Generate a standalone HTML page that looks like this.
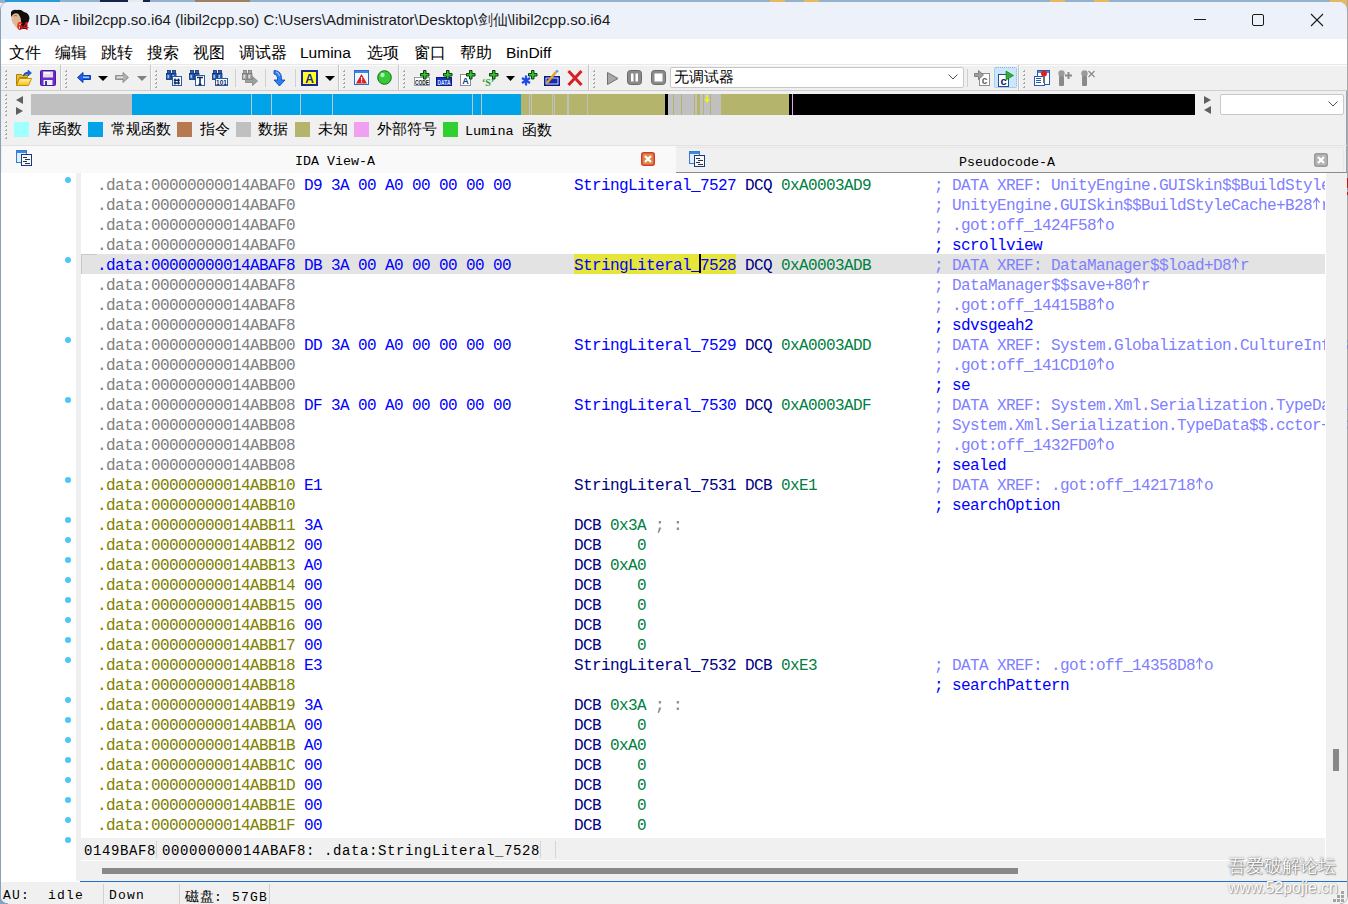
<!DOCTYPE html>
<html><head><meta charset="utf-8"><style>
html,body{margin:0;padding:0;}
body{width:1348px;height:904px;overflow:hidden;position:relative;background:#f0f0f0;font-family:"Liberation Sans",sans-serif;}
.cjk{font-family:"Liberation Sans",sans-serif;}
.r{position:absolute;left:0;height:20px;width:1325px;font-family:"Liberation Mono",monospace;font-size:16px;letter-spacing:-0.6px;line-height:20px;white-space:pre;}
.r span{position:absolute;top:2px;}
.ar{vertical-align:top;display:inline-block;}
.dot{position:absolute;left:65px;width:6px;height:6px;border-radius:50%;background:#4fc4f8;}
.mono13{font-family:"Liberation Mono",monospace;font-size:13.33px;}
</style></head><body>
<!-- desktop strips -->
<div style="position:absolute;left:0;top:0;width:1348px;height:3px;background:#94b2cc"></div>
<div style="position:absolute;left:5px;top:0;width:55px;height:2px;background:#2a9ad8"></div>
<div style="position:absolute;left:100px;top:0;width:50px;height:2px;background:#14244a"></div>
<div style="position:absolute;left:128px;top:0;width:15px;height:2px;background:#e8e8e8"></div>
<div style="position:absolute;left:195px;top:0;width:55px;height:2px;background:#a08060"></div>
<div style="position:absolute;left:770px;top:0;width:15px;height:2px;background:#e8b860"></div>
<div style="position:absolute;left:804px;top:0;width:15px;height:2px;background:#e8b860"></div>
<div style="position:absolute;left:1050px;top:0;width:15px;height:2px;background:#e8b860"></div>
<div style="position:absolute;left:1094px;top:0;width:15px;height:2px;background:#e8b860"></div>
<div style="position:absolute;left:1330px;top:0;width:18px;height:20px;background:#e8b860"></div>
<div style="position:absolute;left:1347px;top:0;width:1px;height:904px;background:#a8a8a8"></div>
<div style="position:absolute;left:1347px;top:178px;width:1px;height:10px;background:#d01010"></div>
<div style="position:absolute;left:1347px;top:192px;width:1px;height:3px;background:#d01010"></div>
<!-- window -->
<div style="position:absolute;left:0;top:2px;width:1347px;height:902px;background:#f0f0f0;border-left:1px solid #8aa2b8;border-top-left-radius:8px;border-top-right-radius:8px;overflow:hidden;box-sizing:border-box;border-right:1px solid #9aa4ae">
</div>
<!-- title bar -->
<div style="position:absolute;left:1px;top:2px;width:1346px;height:37px;background:#edf2fa;border-top-left-radius:8px;border-top-right-radius:8px"></div>
<svg style="position:absolute;left:0;top:0" width="40" height="36" viewBox="0 0 40 36"><path d="M11 12Q13 9 17 10Q21 9 24 12Q29 13 29.5 18Q29 22 27 24L27 29H20L21 22Q20 17 16 14Q13 14 11 17z" fill="#120e0c"/><path d="M12.5 15Q15 12 18.5 14Q21 17 21 22L19.5 28Q17 29 15 26Q12 23 11.5 20Q11 17 12.5 15z" fill="#e2b894"/><path d="M14 16q2-1 3 0" stroke="#705040" stroke-width="0.8" fill="none"/><text x="17" y="29.5" font-size="10.5" font-weight="bold" font-family="Liberation Sans" fill="#e81818">64</text></svg>
<div style="position:absolute;left:35px;top:10px;font-size:15px;line-height:20px;color:#1a1a1a;white-space:pre">IDA - libil2cpp.so.i64 (libil2cpp.so) C:\Users\Administrator\Desktop\剑仙\libil2cpp.so.i64</div>
<div style="position:absolute;left:1194px;top:19px;width:12px;height:1px;background:#1a1a1a"></div>
<div style="position:absolute;left:1252px;top:14px;width:10px;height:10px;border:1px solid #1a1a1a;border-radius:2px"></div>
<svg style="position:absolute;left:1310px;top:13px" width="14" height="14" viewBox="0 0 14 14"><path d="M1 1L13 13M13 1L1 13" stroke="#1a1a1a" stroke-width="1.1"/></svg>
<!-- menu bar -->
<div style="position:absolute;left:1px;top:39px;width:1346px;height:25px;background:#fff"></div>
<div style="position:absolute;left:1px;top:64px;width:1346px;height:1px;background:#e8e8e8"></div>
<div class="menu" style="position:absolute;top:43px;left:0;font-size:15.5px;line-height:20px;color:#000;white-space:pre">
<span style="position:absolute;top:0;left:9px">文件</span><span style="position:absolute;top:0;left:55px">编辑</span><span style="position:absolute;top:0;left:101px">跳转</span><span style="position:absolute;top:0;left:147px">搜索</span><span style="position:absolute;top:0;left:193px">视图</span><span style="position:absolute;top:0;left:239px">调试器</span><span style="position:absolute;top:0;left:300px">Lumina</span><span style="position:absolute;top:0;left:367px">选项</span><span style="position:absolute;top:0;left:414px">窗口</span><span style="position:absolute;top:0;left:460px">帮助</span><span style="position:absolute;top:0;left:506px">BinDiff</span>
</div>
<!-- toolbar -->
<div style="position:absolute;left:1px;top:65px;width:1346px;height:25px;background:#f0f0f0"></div>
<div style="position:absolute;left:1px;top:65px;width:1346px;height:1px;background:#fcfcfc"></div>
<div style="position:absolute;left:1px;top:90px;width:1346px;height:1px;background:#cfcfcf"></div>
<div style="position:absolute;left:5px;top:70px;width:2px;height:2px;background:linear-gradient(135deg,#f8f8f8 0 30%,#a8a8a8 30% 100%)"></div><div style="position:absolute;left:5px;top:74px;width:2px;height:2px;background:linear-gradient(135deg,#f8f8f8 0 30%,#a8a8a8 30% 100%)"></div><div style="position:absolute;left:5px;top:78px;width:2px;height:2px;background:linear-gradient(135deg,#f8f8f8 0 30%,#a8a8a8 30% 100%)"></div><div style="position:absolute;left:5px;top:82px;width:2px;height:2px;background:linear-gradient(135deg,#f8f8f8 0 30%,#a8a8a8 30% 100%)"></div><div style="position:absolute;left:5px;top:86px;width:2px;height:2px;background:linear-gradient(135deg,#f8f8f8 0 30%,#a8a8a8 30% 100%)"></div>
<svg style="position:absolute;left:16px;top:70px" width="16" height="16" viewBox="0 0 16 16"><defs><linearGradient id="fo" x1="0" y1="0" x2="0" y2="1"><stop offset="0" stop-color="#fff4a0"/><stop offset="1" stop-color="#f0c020"/></linearGradient></defs><path d="M0.5 4.5h5l1 1h5v2h-8l-3 8z" fill="#e8c040" stroke="#b08000" stroke-width="1"/><path d="M3.5 8.5h12l-3 7H0.5z" fill="url(#fo)" stroke="#c89000" stroke-width="1"/><path d="M7 6q1-4 5-4V0l3.5 3-3.5 3V4q-3 0-5 2z" fill="#1a5ae8" stroke="#0a3090" stroke-width="0.5"/></svg>
<svg style="position:absolute;left:40px;top:70px" width="16" height="16" viewBox="0 0 16 16"><rect x="0.5" y="0.5" width="15" height="15" rx="1" fill="#6a2ad0" stroke="#4a1a9a"/><rect x="3" y="1.5" width="10" height="6" fill="#e0e0e0"/><rect x="4" y="2" width="6" height="2" fill="#f8f8f8"/><rect x="3.5" y="10" width="9" height="5" fill="#f0f0f0"/><rect x="5" y="11" width="2" height="4" fill="#3a3a9a"/></svg>
<div style="position:absolute;left:60px;top:65px;width:1px;height:25px;background:#c4c4c4"></div><div style="position:absolute;left:61px;top:65px;width:1px;height:25px;background:#fafafa"></div>
<div style="position:absolute;left:65px;top:70px;width:2px;height:2px;background:linear-gradient(135deg,#f8f8f8 0 30%,#a8a8a8 30% 100%)"></div><div style="position:absolute;left:65px;top:74px;width:2px;height:2px;background:linear-gradient(135deg,#f8f8f8 0 30%,#a8a8a8 30% 100%)"></div><div style="position:absolute;left:65px;top:78px;width:2px;height:2px;background:linear-gradient(135deg,#f8f8f8 0 30%,#a8a8a8 30% 100%)"></div><div style="position:absolute;left:65px;top:82px;width:2px;height:2px;background:linear-gradient(135deg,#f8f8f8 0 30%,#a8a8a8 30% 100%)"></div><div style="position:absolute;left:65px;top:86px;width:2px;height:2px;background:linear-gradient(135deg,#f8f8f8 0 30%,#a8a8a8 30% 100%)"></div>
<svg style="position:absolute;left:77px;top:72px" width="14" height="11" viewBox="0 0 14 11"><path d="M0.5 5.5L6 0.5v3h7.5v4H6v3z" fill="#1e5ef0" stroke="#0a2aa0" stroke-width="0.9"/><rect x="6" y="4.5" width="6" height="1.5" fill="#8ad0ff"/></svg>
<svg style="position:absolute;left:98px;top:76px" width="10" height="5" viewBox="0 0 10 5"><path d="M0 0h10L5 5z" fill="#000"/></svg>
<svg style="position:absolute;left:115px;top:72px" width="14" height="11" viewBox="0 0 14 11"><path d="M13.5 5.5L8 0.5v3H0.5v4H8v3z" fill="#b0b0b0" stroke="#888" stroke-width="0.9"/><rect x="2" y="4.5" width="6" height="1.5" fill="#e0e0e0"/></svg>
<svg style="position:absolute;left:137px;top:76px" width="10" height="5" viewBox="0 0 10 5"><path d="M0 0h10L5 5z" fill="#808080"/></svg>
<div style="position:absolute;left:150px;top:65px;width:1px;height:25px;background:#c4c4c4"></div><div style="position:absolute;left:151px;top:65px;width:1px;height:25px;background:#fafafa"></div>
<div style="position:absolute;left:155px;top:70px;width:2px;height:2px;background:linear-gradient(135deg,#f8f8f8 0 30%,#a8a8a8 30% 100%)"></div><div style="position:absolute;left:155px;top:74px;width:2px;height:2px;background:linear-gradient(135deg,#f8f8f8 0 30%,#a8a8a8 30% 100%)"></div><div style="position:absolute;left:155px;top:78px;width:2px;height:2px;background:linear-gradient(135deg,#f8f8f8 0 30%,#a8a8a8 30% 100%)"></div><div style="position:absolute;left:155px;top:82px;width:2px;height:2px;background:linear-gradient(135deg,#f8f8f8 0 30%,#a8a8a8 30% 100%)"></div><div style="position:absolute;left:155px;top:86px;width:2px;height:2px;background:linear-gradient(135deg,#f8f8f8 0 30%,#a8a8a8 30% 100%)"></div>
<svg style="position:absolute;left:166px;top:70px" width="16" height="16" viewBox="0 0 16 16"><rect x="1.5" y="0.5" width="3" height="3" fill="#2a62c0" stroke="#14306a" stroke-width="0.8"/><rect x="6.5" y="0.5" width="3" height="3" fill="#2a62c0" stroke="#14306a" stroke-width="0.8"/><rect x="0.5" y="3.5" width="4.5" height="6" fill="#2a62c0" stroke="#14306a" stroke-width="0.8"/><rect x="5.5" y="3.5" width="4.5" height="6" fill="#2a62c0" stroke="#14306a" stroke-width="0.8"/><rect x="1.5" y="5" width="1.5" height="3" fill="#9ac8f8"/><rect x="6.5" y="5" width="1.5" height="3" fill="#9ac8f8"/><rect x="6.5" y="6.5" width="9" height="9" fill="#fff" stroke="#2a5aa0"/><path d="M9 8.5v6M12.5 8.5v6M7.8 10.3h6M7.8 13h6" stroke="#102a60" stroke-width="1.4"/></svg>
<svg style="position:absolute;left:189px;top:70px" width="16" height="16" viewBox="0 0 16 16"><rect x="1.5" y="0.5" width="3" height="3" fill="#2a62c0" stroke="#14306a" stroke-width="0.8"/><rect x="6.5" y="0.5" width="3" height="3" fill="#2a62c0" stroke="#14306a" stroke-width="0.8"/><rect x="0.5" y="3.5" width="4.5" height="6" fill="#2a62c0" stroke="#14306a" stroke-width="0.8"/><rect x="5.5" y="3.5" width="4.5" height="6" fill="#2a62c0" stroke="#14306a" stroke-width="0.8"/><rect x="1.5" y="5" width="1.5" height="3" fill="#9ac8f8"/><rect x="6.5" y="5" width="1.5" height="3" fill="#9ac8f8"/><rect x="6.5" y="5.5" width="9" height="10" fill="#fff" stroke="#2a5aa0"/><path d="M8 7.5h6M11 7.5v7M9.5 14.5h3" stroke="#102a60" stroke-width="1.6"/></svg>
<svg style="position:absolute;left:212px;top:70px" width="16" height="16" viewBox="0 0 16 16"><rect x="1.5" y="0.5" width="3" height="3" fill="#2a62c0" stroke="#14306a" stroke-width="0.8"/><rect x="6.5" y="0.5" width="3" height="3" fill="#2a62c0" stroke="#14306a" stroke-width="0.8"/><rect x="0.5" y="3.5" width="4.5" height="6" fill="#2a62c0" stroke="#14306a" stroke-width="0.8"/><rect x="5.5" y="3.5" width="4.5" height="6" fill="#2a62c0" stroke="#14306a" stroke-width="0.8"/><rect x="1.5" y="5" width="1.5" height="3" fill="#9ac8f8"/><rect x="6.5" y="5" width="1.5" height="3" fill="#9ac8f8"/><rect x="3.5" y="8.5" width="12" height="7" fill="#fff" stroke="#2a5aa0"/><text x="9.5" y="14.6" font-size="6.5" font-family="Liberation Sans" font-weight="bold" text-anchor="middle" fill="#102a60">101</text></svg>
<div style="position:absolute;left:235px;top:69px;width:1px;height:18px;background:#d0d0d0"></div>
<svg style="position:absolute;left:242px;top:70px" width="16" height="16" viewBox="0 0 16 16"><rect x="1.5" y="0.5" width="3" height="3" fill="#a8a8a8" stroke="#787878" stroke-width="0.8"/><rect x="6.5" y="0.5" width="3" height="3" fill="#a8a8a8" stroke="#787878" stroke-width="0.8"/><rect x="0.5" y="3.5" width="4.5" height="6" fill="#a8a8a8" stroke="#787878" stroke-width="0.8"/><rect x="5.5" y="3.5" width="4.5" height="6" fill="#a8a8a8" stroke="#787878" stroke-width="0.8"/><rect x="1.5" y="5" width="1.5" height="3" fill="#e0e0e0"/><rect x="6.5" y="5" width="1.5" height="3" fill="#e0e0e0"/><path d="M3.5 9.5h7v-3l5 4.5-5 4.5v-3h-7z" fill="#a0a0a0" stroke="#808080" stroke-width="0.8"/></svg>
<div style="position:absolute;left:265px;top:69px;width:1px;height:18px;background:#d0d0d0"></div>
<svg style="position:absolute;left:273px;top:70px" width="13" height="16" viewBox="0 0 13 16"><path d="M1 0.5q7 0 7.5 7v2.5h3.5l-5.5 6-5.5-6h3.5V8q0-3.5-3.5-4z" fill="#2a80f0" stroke="#0a40b0" stroke-width="0.8"/><path d="M3 2q3 0.5 3.5 4" stroke="#a0d8ff" stroke-width="1" fill="none"/></svg>
<div style="position:absolute;left:295px;top:69px;width:1px;height:18px;background:#d0d0d0"></div>
<svg style="position:absolute;left:301px;top:70px" width="17" height="16" viewBox="0 0 17 16"><rect x="1" y="1" width="15" height="14" fill="#ffff20" stroke="#1a2a90" stroke-width="2"/><text x="8.5" y="13" font-size="12" font-family="Liberation Sans" font-weight="bold" text-anchor="middle" fill="#1a2a90">A</text></svg>
<svg style="position:absolute;left:325px;top:76px" width="10" height="5" viewBox="0 0 10 5"><path d="M0 0h10L5 5z" fill="#000"/></svg>
<div style="position:absolute;left:338px;top:65px;width:1px;height:25px;background:#c4c4c4"></div><div style="position:absolute;left:339px;top:65px;width:1px;height:25px;background:#fafafa"></div>
<div style="position:absolute;left:343px;top:70px;width:2px;height:2px;background:linear-gradient(135deg,#f8f8f8 0 30%,#a8a8a8 30% 100%)"></div><div style="position:absolute;left:343px;top:74px;width:2px;height:2px;background:linear-gradient(135deg,#f8f8f8 0 30%,#a8a8a8 30% 100%)"></div><div style="position:absolute;left:343px;top:78px;width:2px;height:2px;background:linear-gradient(135deg,#f8f8f8 0 30%,#a8a8a8 30% 100%)"></div><div style="position:absolute;left:343px;top:82px;width:2px;height:2px;background:linear-gradient(135deg,#f8f8f8 0 30%,#a8a8a8 30% 100%)"></div><div style="position:absolute;left:343px;top:86px;width:2px;height:2px;background:linear-gradient(135deg,#f8f8f8 0 30%,#a8a8a8 30% 100%)"></div>
<svg style="position:absolute;left:354px;top:70px" width="15" height="15" viewBox="0 0 15 15"><rect x="0.5" y="0.5" width="14" height="14" fill="#eef8ff" stroke="#2a6ad0"/><rect x="1" y="1" width="13" height="2" fill="#3a8ae0"/><path d="M7.5 4L13 13.5H2z" fill="#d82020"/><rect x="7" y="7" width="1.2" height="3.5" fill="#fff"/><rect x="7" y="11.3" width="1.2" height="1.2" fill="#fff"/></svg>
<svg style="position:absolute;left:377px;top:70px" width="15" height="15" viewBox="0 0 15 15"><circle cx="7.5" cy="7.5" r="6.8" fill="#38c838" stroke="#0a700a" stroke-width="1"/><circle cx="5.5" cy="5" r="2.2" fill="#a8f0c0"/></svg>
<div style="position:absolute;left:398px;top:65px;width:1px;height:25px;background:#c4c4c4"></div><div style="position:absolute;left:399px;top:65px;width:1px;height:25px;background:#fafafa"></div>
<div style="position:absolute;left:403px;top:70px;width:2px;height:2px;background:linear-gradient(135deg,#f8f8f8 0 30%,#a8a8a8 30% 100%)"></div><div style="position:absolute;left:403px;top:74px;width:2px;height:2px;background:linear-gradient(135deg,#f8f8f8 0 30%,#a8a8a8 30% 100%)"></div><div style="position:absolute;left:403px;top:78px;width:2px;height:2px;background:linear-gradient(135deg,#f8f8f8 0 30%,#a8a8a8 30% 100%)"></div><div style="position:absolute;left:403px;top:82px;width:2px;height:2px;background:linear-gradient(135deg,#f8f8f8 0 30%,#a8a8a8 30% 100%)"></div><div style="position:absolute;left:403px;top:86px;width:2px;height:2px;background:linear-gradient(135deg,#f8f8f8 0 30%,#a8a8a8 30% 100%)"></div>
<svg style="position:absolute;left:414px;top:70px" width="17" height="16" viewBox="0 0 17 16"><rect x="0.5" y="7.5" width="15" height="8" fill="#fff" stroke="#7a8aa0" stroke-width="0.8"/><text x="8" y="14.6" font-size="7.5" font-family="Liberation Sans" font-weight="bold" text-anchor="middle" fill="#101010" textLength="14" lengthAdjust="spacingAndGlyphs">CODE</text><path d="M9.5 0.5h2.5v3h3v2.5h-3v3h-2.5v-3h-3v-2.5h3z" fill="#30c030" stroke="#0a400a" stroke-width="1"/></svg>
<svg style="position:absolute;left:436px;top:70px" width="17" height="16" viewBox="0 0 17 16"><rect x="0.5" y="7.5" width="15" height="8" fill="#1a30c8" stroke="#0a1a80" stroke-width="1"/><text x="8" y="14.6" font-size="7.5" font-family="Liberation Sans" font-weight="bold" text-anchor="middle" fill="#d0e8ff" textLength="13" lengthAdjust="spacingAndGlyphs">DATA</text><path d="M10.5 0.5h2.5v3h3v2.5h-3v3h-2.5v-3h-3v-2.5h3z" fill="#30c030" stroke="#0a400a" stroke-width="1"/></svg>
<svg style="position:absolute;left:459px;top:70px" width="17" height="16" viewBox="0 0 17 16"><rect x="1.5" y="4.5" width="10" height="11" fill="#fff" stroke="#8090a0" stroke-width="1"/><text x="6.5" y="14" font-size="9" font-family="Liberation Sans" font-weight="bold" text-anchor="middle" fill="#1a3a80">A</text><path d="M10.5 0.5h2.5v3h3v2.5h-3v3h-2.5v-3h-3v-2.5h3z" fill="#30c030" stroke="#0a400a" stroke-width="1"/></svg>
<svg style="position:absolute;left:482px;top:70px" width="17" height="16" viewBox="0 0 17 16"><text x="6" y="15.5" font-size="10" font-family="Liberation Serif" font-weight="bold" text-anchor="middle" fill="#2a9a2a">‘S’</text><path d="M10.5 0.5h2.5v3h3v2.5h-3v3h-2.5v-3h-3v-2.5h3z" fill="#30c030" stroke="#0a400a" stroke-width="1"/></svg>
<svg style="position:absolute;left:506px;top:76px" width="9" height="5" viewBox="0 0 9 5"><path d="M0 0h9L4.5 5z" fill="#000"/></svg>
<svg style="position:absolute;left:521px;top:70px" width="17" height="16" viewBox="0 0 17 16"><path d="M5 5.5v10M1 8l8 5M9 8l-8 5" stroke="#1a4ae8" stroke-width="2.2"/><path d="M10.5 0.5h2.5v3h3v2.5h-3v3h-2.5v-3h-3v-2.5h3z" fill="#30c030" stroke="#0a400a" stroke-width="1"/></svg>
<svg style="position:absolute;left:544px;top:70px" width="16" height="16" viewBox="0 0 16 16"><rect x="0.75" y="6.75" width="14.5" height="8.5" fill="#1a2ab0" stroke="#0a1a80" stroke-width="1.5"/><rect x="2" y="8" width="12" height="6" fill="none" stroke="#fff" stroke-width="0.8"/><path d="M3 13l9-11" stroke="#e8a020" stroke-width="2.4"/><path d="M12 2l2-1.5" stroke="#60a0e0" stroke-width="2.4"/></svg>
<svg style="position:absolute;left:567px;top:70px" width="16" height="16" viewBox="0 0 16 16"><path d="M1.5 1L14.5 15M14.5 1L1.5 15" stroke="#d82020" stroke-width="3"/></svg>
<div style="position:absolute;left:588px;top:65px;width:1px;height:25px;background:#c4c4c4"></div><div style="position:absolute;left:589px;top:65px;width:1px;height:25px;background:#fafafa"></div>
<div style="position:absolute;left:593px;top:70px;width:2px;height:2px;background:linear-gradient(135deg,#f8f8f8 0 30%,#a8a8a8 30% 100%)"></div><div style="position:absolute;left:593px;top:74px;width:2px;height:2px;background:linear-gradient(135deg,#f8f8f8 0 30%,#a8a8a8 30% 100%)"></div><div style="position:absolute;left:593px;top:78px;width:2px;height:2px;background:linear-gradient(135deg,#f8f8f8 0 30%,#a8a8a8 30% 100%)"></div><div style="position:absolute;left:593px;top:82px;width:2px;height:2px;background:linear-gradient(135deg,#f8f8f8 0 30%,#a8a8a8 30% 100%)"></div><div style="position:absolute;left:593px;top:86px;width:2px;height:2px;background:linear-gradient(135deg,#f8f8f8 0 30%,#a8a8a8 30% 100%)"></div>
<svg style="position:absolute;left:607px;top:72px" width="12" height="13" viewBox="0 0 12 13"><path d="M0.5 0.5L11 6.5L0.5 12.5z" fill="#a8a8a8" stroke="#707070"/></svg>
<svg style="position:absolute;left:627px;top:70px" width="15" height="15" viewBox="0 0 15 15"><rect x="0.5" y="0.5" width="14" height="14" rx="3" fill="#8a8a8a" stroke="#6a6a6a"/><rect x="4" y="3.5" width="2.5" height="8" fill="#fff"/><rect x="8.5" y="3.5" width="2.5" height="8" fill="#fff"/></svg>
<svg style="position:absolute;left:651px;top:70px" width="15" height="15" viewBox="0 0 15 15"><rect x="0.5" y="0.5" width="14" height="14" rx="3" fill="#8a8a8a" stroke="#6a6a6a"/><rect x="3.5" y="3.5" width="8" height="8" fill="#fff"/></svg>
<div style="position:absolute;left:670px;top:67px;width:292px;height:19px;background:#fff;border:1px solid #c8c8c8;border-radius:2px"></div>
<div class="cjk" style="position:absolute;left:674px;top:67px;font-size:15px;line-height:20px;color:#000">无调试器</div>
<svg style="position:absolute;left:948px;top:74px" width="10" height="6" viewBox="0 0 10 6"><path d="M0.5 0.5L5 5L9.5 0.5" fill="none" stroke="#505050" stroke-width="1"/></svg>
<div style="position:absolute;left:967px;top:69px;width:1px;height:18px;background:#d0d0d0"></div>
<svg style="position:absolute;left:974px;top:70px" width="16" height="16" viewBox="0 0 16 16"><rect x="5.5" y="3.5" width="10" height="12" fill="#fff" stroke="#909090"/><text x="10.5" y="14" font-size="10" font-family="Liberation Sans" font-weight="bold" text-anchor="middle" fill="#606060">c</text><path d="M0.5 3.5h4V0.5l5 4.5-5 4.5v-3h-4z" fill="#a0a0a0" stroke="#707070" stroke-width="0.8"/></svg>
<div style="position:absolute;left:994px;top:67px;width:21px;height:19px;background:#cce6fa;border:1px dotted #7ab8ec;border-radius:2px"></div>
<svg style="position:absolute;left:997px;top:70px" width="18" height="17" viewBox="0 0 18 17"><rect x="1.5" y="4.5" width="10" height="12" fill="#fff" stroke="#2a4a90"/><text x="6.5" y="14.5" font-size="11" font-family="Liberation Sans" font-weight="bold" text-anchor="middle" fill="#10206a">c</text><path d="M9 1l7.5 4.5L9 10z" fill="#30b030" stroke="#107010" stroke-width="0.6"/></svg>
<div style="position:absolute;left:1018px;top:65px;width:1px;height:25px;background:#c4c4c4"></div><div style="position:absolute;left:1019px;top:65px;width:1px;height:25px;background:#fafafa"></div>
<div style="position:absolute;left:1023px;top:70px;width:2px;height:2px;background:linear-gradient(135deg,#f8f8f8 0 30%,#a8a8a8 30% 100%)"></div><div style="position:absolute;left:1023px;top:74px;width:2px;height:2px;background:linear-gradient(135deg,#f8f8f8 0 30%,#a8a8a8 30% 100%)"></div><div style="position:absolute;left:1023px;top:78px;width:2px;height:2px;background:linear-gradient(135deg,#f8f8f8 0 30%,#a8a8a8 30% 100%)"></div><div style="position:absolute;left:1023px;top:82px;width:2px;height:2px;background:linear-gradient(135deg,#f8f8f8 0 30%,#a8a8a8 30% 100%)"></div><div style="position:absolute;left:1023px;top:86px;width:2px;height:2px;background:linear-gradient(135deg,#f8f8f8 0 30%,#a8a8a8 30% 100%)"></div>
<svg style="position:absolute;left:1034px;top:70px" width="16" height="16" viewBox="0 0 16 16"><rect x="3.5" y="0.5" width="12" height="14" fill="#fff" stroke="#2a5ab0"/><rect x="4" y="1" width="11" height="2" fill="#4a8ae0"/><rect x="0.5" y="6.5" width="10" height="9" fill="#fff" stroke="#2a5ab0"/><rect x="2" y="8" width="5" height="1" fill="#2a5ab0"/><rect x="2" y="10" width="5" height="1" fill="#2a5ab0"/><rect x="2" y="12" width="5" height="1" fill="#2a5ab0"/><circle cx="10" cy="3.5" r="3" fill="#e02020"/><rect x="9" y="6" width="2" height="7" fill="#707070"/></svg>
<svg style="position:absolute;left:1057px;top:70px" width="16" height="16" viewBox="0 0 16 16"><circle cx="4.5" cy="3.5" r="3.2" fill="#9a9a9a"/><rect x="2" y="6" width="5" height="10" rx="1" fill="#8a8a8a"/><path d="M8 5.5h7M11.5 2v7" stroke="#8a8a8a" stroke-width="2"/></svg>
<svg style="position:absolute;left:1080px;top:70px" width="16" height="16" viewBox="0 0 16 16"><circle cx="4.5" cy="3.5" r="3.2" fill="#9a9a9a"/><rect x="2" y="6" width="5" height="10" rx="1" fill="#8a8a8a"/><path d="M8.5 1l6 6M14.5 1l-6 6" stroke="#8a8a8a" stroke-width="1.2"/></svg>
<!-- navigator -->
<div style="position:absolute;left:5px;top:94px;width:2px;height:2px;background:linear-gradient(135deg,#f8f8f8 0 30%,#a8a8a8 30% 100%)"></div><div style="position:absolute;left:5px;top:98px;width:2px;height:2px;background:linear-gradient(135deg,#f8f8f8 0 30%,#a8a8a8 30% 100%)"></div><div style="position:absolute;left:5px;top:102px;width:2px;height:2px;background:linear-gradient(135deg,#f8f8f8 0 30%,#a8a8a8 30% 100%)"></div><div style="position:absolute;left:5px;top:106px;width:2px;height:2px;background:linear-gradient(135deg,#f8f8f8 0 30%,#a8a8a8 30% 100%)"></div><div style="position:absolute;left:5px;top:110px;width:2px;height:2px;background:linear-gradient(135deg,#f8f8f8 0 30%,#a8a8a8 30% 100%)"></div><div style="position:absolute;left:5px;top:114px;width:2px;height:2px;background:linear-gradient(135deg,#f8f8f8 0 30%,#a8a8a8 30% 100%)"></div>
<svg style="position:absolute;left:16px;top:96px" width="7" height="8" viewBox="0 0 7 8"><path d="M7 0v8L0 4z" fill="#606060"/></svg>
<svg style="position:absolute;left:16px;top:107px" width="7" height="8" viewBox="0 0 7 8"><path d="M0 0v8l7-4z" fill="#606060"/></svg>
<div style="position:absolute;left:31px;top:94px;width:101px;height:21px;background:#c0c0c0"></div>
<div style="position:absolute;left:132px;top:94px;width:389px;height:21px;background:#00a2e8"></div>
<div style="position:absolute;left:521px;top:94px;width:144px;height:21px;background:#b4b46c"></div>
<div style="position:absolute;left:665px;top:94px;width:3px;height:21px;background:#000"></div>
<div style="position:absolute;left:668px;top:94px;width:53px;height:21px;background:#c0c0c0"></div>
<div style="position:absolute;left:721px;top:94px;width:68px;height:21px;background:#b4b46c"></div>
<div style="position:absolute;left:789px;top:94px;width:3px;height:21px;background:#000"></div>
<div style="position:absolute;left:792px;top:94px;width:1px;height:21px;background:#f0a0f0"></div>
<div style="position:absolute;left:793px;top:94px;width:402px;height:21px;background:#000"></div>
<div style="position:absolute;left:251px;top:94px;width:1px;height:21px;background:#b8c8d0"></div>
<div style="position:absolute;left:271px;top:94px;width:1px;height:21px;background:#b8c8d0"></div>
<div style="position:absolute;left:300px;top:94px;width:1px;height:21px;background:#b8c8d0"></div>
<div style="position:absolute;left:332px;top:94px;width:1px;height:21px;background:#b8c8d0"></div>
<div style="position:absolute;left:472px;top:94px;width:1px;height:21px;background:#b8c8d0"></div>
<div style="position:absolute;left:481px;top:94px;width:1px;height:21px;background:#b8c8d0"></div>
<div style="position:absolute;left:529px;top:94px;width:1px;height:21px;background:#c0c0c0"></div>
<div style="position:absolute;left:531px;top:94px;width:1px;height:21px;background:#c0c0c0"></div>
<div style="position:absolute;left:552px;top:94px;width:1px;height:21px;background:#c0c0c0"></div>
<div style="position:absolute;left:554px;top:94px;width:1px;height:21px;background:#c0c0c0"></div>
<div style="position:absolute;left:567px;top:94px;width:1px;height:21px;background:#c0c0c0"></div>
<div style="position:absolute;left:568px;top:94px;width:1px;height:21px;background:#c0c0c0"></div>
<div style="position:absolute;left:587px;top:94px;width:1px;height:21px;background:#c0c0c0"></div>
<div style="position:absolute;left:673px;top:94px;width:1px;height:21px;background:#b4b46c"></div>
<div style="position:absolute;left:681px;top:94px;width:1px;height:21px;background:#b4b46c"></div>
<div style="position:absolute;left:694px;top:94px;width:1px;height:21px;background:#b4b46c"></div>
<div style="position:absolute;left:697px;top:94px;width:3px;height:21px;background:#b4b46c"></div>
<div style="position:absolute;left:703px;top:94px;width:1px;height:21px;background:#b4b46c"></div>
<div style="position:absolute;left:710px;top:94px;width:1px;height:21px;background:#b4b46c"></div>
<svg style="position:absolute;left:704px;top:95px" width="6" height="8" viewBox="0 0 6 8"><path d="M2 0h2v4h2L3 8 0 4h2z" fill="#f0f020"/></svg>
<svg style="position:absolute;left:1204px;top:96px" width="7" height="8" viewBox="0 0 7 8"><path d="M0 0v8l7-4z" fill="#606060"/></svg>
<svg style="position:absolute;left:1204px;top:106px" width="7" height="8" viewBox="0 0 7 8"><path d="M7 0v8L0 4z" fill="#606060"/></svg>
<div style="position:absolute;left:1220px;top:94px;width:122px;height:19px;background:#fff;border:1px solid #c8c8c8;border-radius:2px"></div>
<svg style="position:absolute;left:1328px;top:101px" width="10" height="6" viewBox="0 0 10 6"><path d="M0.5 0.5L5 5L9.5 0.5" fill="none" stroke="#505050" stroke-width="1"/></svg>
<!-- legend -->
<div style="position:absolute;left:5px;top:121px;width:2px;height:2px;background:linear-gradient(135deg,#f8f8f8 0 30%,#a8a8a8 30% 100%)"></div><div style="position:absolute;left:5px;top:125px;width:2px;height:2px;background:linear-gradient(135deg,#f8f8f8 0 30%,#a8a8a8 30% 100%)"></div><div style="position:absolute;left:5px;top:129px;width:2px;height:2px;background:linear-gradient(135deg,#f8f8f8 0 30%,#a8a8a8 30% 100%)"></div><div style="position:absolute;left:5px;top:133px;width:2px;height:2px;background:linear-gradient(135deg,#f8f8f8 0 30%,#a8a8a8 30% 100%)"></div><div style="position:absolute;left:5px;top:137px;width:2px;height:2px;background:linear-gradient(135deg,#f8f8f8 0 30%,#a8a8a8 30% 100%)"></div>
<div style="position:absolute;left:14px;top:122px;width:15px;height:15px;background:#a0ffff"></div>
<div class="cjk" style="position:absolute;left:37px;top:119px;font-size:15px;line-height:20px">库函数</div>
<div style="position:absolute;left:88px;top:122px;width:15px;height:15px;background:#00a2e8"></div>
<div class="cjk" style="position:absolute;left:111px;top:119px;font-size:15px;line-height:20px">常规函数</div>
<div style="position:absolute;left:177px;top:122px;width:15px;height:15px;background:#b87850"></div>
<div class="cjk" style="position:absolute;left:200px;top:119px;font-size:15px;line-height:20px">指令</div>
<div style="position:absolute;left:236px;top:122px;width:15px;height:15px;background:#c0c0c0"></div>
<div class="cjk" style="position:absolute;left:258px;top:119px;font-size:15px;line-height:20px">数据</div>
<div style="position:absolute;left:295px;top:122px;width:15px;height:15px;background:#b4b46c"></div>
<div class="cjk" style="position:absolute;left:318px;top:119px;font-size:15px;line-height:20px">未知</div>
<div style="position:absolute;left:354px;top:122px;width:15px;height:15px;background:#f0a0f0"></div>
<div class="cjk" style="position:absolute;left:377px;top:119px;font-size:15px;line-height:20px">外部符号</div>
<div style="position:absolute;left:443px;top:122px;width:15px;height:15px;background:#30d030"></div>
<div style="position:absolute;left:465px;top:120px;font-family:'Liberation Mono';font-size:13.5px;line-height:20px;white-space:pre">Lumina <span class="cjk" style="font-size:15px">函数</span></div>
<!-- tabs -->
<div style="position:absolute;left:1px;top:145px;width:1346px;height:1px;background:#e2e2e2"></div>
<div style="position:absolute;left:2px;top:146px;width:674px;height:27px;background:#f9f9f9"></div>
<div style="position:absolute;left:676px;top:147px;width:668px;height:25px;background:#f0f0f0;border-top:1px solid #e6e6e6;border-right:1px solid #e6e6e6;box-sizing:border-box"></div>
<div style="position:absolute;left:676px;top:172px;width:671px;height:1px;background:#8c8c8c"></div>
<svg style="position:absolute;left:16px;top:150px" width="16" height="16" viewBox="0 0 16 16"><rect x="0.5" y="0.5" width="10" height="12" fill="#e0f0ff" stroke="#3a7ad0"/><rect x="1" y="1" width="9" height="2" fill="#3a8ae0"/><rect x="5.5" y="4.5" width="10" height="11" fill="#f4faff" stroke="#1a3a80"/><rect x="7" y="7" width="4" height="1" fill="#333"/><rect x="9" y="9" width="5" height="1" fill="#333"/><rect x="7" y="11" width="4" height="1" fill="#333"/><rect x="9" y="13" width="5" height="1" fill="#333"/></svg>
<svg style="position:absolute;left:689px;top:151px" width="16" height="16" viewBox="0 0 16 16"><rect x="0.5" y="0.5" width="10" height="12" fill="#e0f0ff" stroke="#3a7ad0"/><rect x="1" y="1" width="9" height="2" fill="#3a8ae0"/><rect x="5.5" y="4.5" width="10" height="11" fill="#f4faff" stroke="#1a3a80"/><rect x="7" y="7" width="4" height="1" fill="#333"/><rect x="9" y="9" width="5" height="1" fill="#333"/><rect x="7" y="11" width="4" height="1" fill="#333"/><rect x="9" y="13" width="5" height="1" fill="#333"/></svg>
<div class="mono13" style="position:absolute;left:295px;top:151.5px;line-height:20px;color:#000;white-space:pre">IDA View-A</div>
<div class="mono13" style="position:absolute;left:959px;top:152.5px;line-height:20px;color:#000;white-space:pre">Pseudocode-A</div>
<svg style="position:absolute;left:641px;top:152px" width="14" height="14" viewBox="0 0 14 14"><rect x="0.75" y="0.75" width="12.5" height="12.5" rx="2" fill="#d98a4a" stroke="#d83a2a" stroke-width="1.5"/><path d="M4 4L10 10M10 4L4 10" stroke="#fff" stroke-width="2.2"/></svg>
<svg style="position:absolute;left:1314px;top:153px" width="14" height="14" viewBox="0 0 14 14"><rect x="0.75" y="0.75" width="12.5" height="12.5" rx="2" fill="#b4b4b4" stroke="#9a9a9a" stroke-width="1.5"/><path d="M4 4L10 10M10 4L4 10" stroke="#fff" stroke-width="2.2"/></svg>
<!-- listing -->
<div style="position:absolute;left:1px;top:173px;width:1324px;height:709px;background:#fff"></div>
<div style="position:absolute;left:76px;top:173px;width:5px;height:708px;background:#efefef"></div>
<div style="position:absolute;left:81px;top:254px;width:1244px;height:20px;background:#e3e3e3"></div>
<div style="position:absolute;left:81px;top:254px;width:1px;height:20px;background:#c8c8c8"></div>
<div style="position:absolute;left:81px;top:254px;width:16px;height:1px;background:#c8c8c8"></div>
<div style="position:absolute;left:574px;top:254px;width:162px;height:20px;background:#e6e63a"></div>
<div class="r" style="top:174px"><span style="left:97.0px;color:#808080">.data:00000000014ABAF0</span><span style="left:304.0px;color:#0000ff">D9 3A 00 A0 00 00 00 00</span><span style="left:574.0px;color:#0000ff">StringLiteral_7527</span><span style="left:745.0px;color:#000080">DCQ</span><span style="left:781.0px;color:#008040">0xA0003AD9</span><span style="left:934.0px;color:#8080ff">; DATA XREF: UnityEngine.GUISkin$$BuildStyleCache+B0<svg class="ar" width="9" height="18" viewBox="0 0 9 18"><path d="M4.5 2.3V13.6M1.4 6.6L4.5 2.3L7.6 6.6" fill="none" stroke="currentColor" stroke-width="1.15"/></svg>r</span></div>
<div class="r" style="top:194px"><span style="left:97.0px;color:#808080">.data:00000000014ABAF0</span><span style="left:934.0px;color:#8080ff">; UnityEngine.GUISkin$$BuildStyleCache+B28<svg class="ar" width="9" height="18" viewBox="0 0 9 18"><path d="M4.5 2.3V13.6M1.4 6.6L4.5 2.3L7.6 6.6" fill="none" stroke="currentColor" stroke-width="1.15"/></svg>r</span></div>
<div class="r" style="top:214px"><span style="left:97.0px;color:#808080">.data:00000000014ABAF0</span><span style="left:934.0px;color:#8080ff">; .got:off_1424F58<svg class="ar" width="9" height="18" viewBox="0 0 9 18"><path d="M4.5 2.3V13.6M1.4 6.6L4.5 2.3L7.6 6.6" fill="none" stroke="currentColor" stroke-width="1.15"/></svg>o</span></div>
<div class="r" style="top:234px"><span style="left:97.0px;color:#808080">.data:00000000014ABAF0</span><span style="left:934.0px;color:#0000ff">; scrollview</span></div>
<div class="r" style="top:254px"><span style="left:97.0px;color:#0000ff">.data:00000000014ABAF8</span><span style="left:304.0px;color:#0000ff">DB 3A 00 A0 00 00 00 00</span><span style="left:574.0px;color:#0000ff">StringLiteral_7528</span><span style="left:745.0px;color:#000080">DCQ</span><span style="left:781.0px;color:#008040">0xA0003ADB</span><span style="left:934.0px;color:#8080ff">; DATA XREF: DataManager$$load+D8<svg class="ar" width="9" height="18" viewBox="0 0 9 18"><path d="M4.5 2.3V13.6M1.4 6.6L4.5 2.3L7.6 6.6" fill="none" stroke="currentColor" stroke-width="1.15"/></svg>r</span></div>
<div class="r" style="top:274px"><span style="left:97.0px;color:#808080">.data:00000000014ABAF8</span><span style="left:934.0px;color:#8080ff">; DataManager$$save+80<svg class="ar" width="9" height="18" viewBox="0 0 9 18"><path d="M4.5 2.3V13.6M1.4 6.6L4.5 2.3L7.6 6.6" fill="none" stroke="currentColor" stroke-width="1.15"/></svg>r</span></div>
<div class="r" style="top:294px"><span style="left:97.0px;color:#808080">.data:00000000014ABAF8</span><span style="left:934.0px;color:#8080ff">; .got:off_14415B8<svg class="ar" width="9" height="18" viewBox="0 0 9 18"><path d="M4.5 2.3V13.6M1.4 6.6L4.5 2.3L7.6 6.6" fill="none" stroke="currentColor" stroke-width="1.15"/></svg>o</span></div>
<div class="r" style="top:314px"><span style="left:97.0px;color:#808080">.data:00000000014ABAF8</span><span style="left:934.0px;color:#0000ff">; sdvsgeah2</span></div>
<div class="r" style="top:334px"><span style="left:97.0px;color:#808080">.data:00000000014ABB00</span><span style="left:304.0px;color:#0000ff">DD 3A 00 A0 00 00 00 00</span><span style="left:574.0px;color:#0000ff">StringLiteral_7529</span><span style="left:745.0px;color:#000080">DCQ</span><span style="left:781.0px;color:#008040">0xA0003ADD</span><span style="left:934.0px;color:#8080ff">; DATA XREF: System.Globalization.CultureInfo$$get_Name</span></div>
<div class="r" style="top:354px"><span style="left:97.0px;color:#808080">.data:00000000014ABB00</span><span style="left:934.0px;color:#8080ff">; .got:off_141CD10<svg class="ar" width="9" height="18" viewBox="0 0 9 18"><path d="M4.5 2.3V13.6M1.4 6.6L4.5 2.3L7.6 6.6" fill="none" stroke="currentColor" stroke-width="1.15"/></svg>o</span></div>
<div class="r" style="top:374px"><span style="left:97.0px;color:#808080">.data:00000000014ABB00</span><span style="left:934.0px;color:#0000ff">; se</span></div>
<div class="r" style="top:394px"><span style="left:97.0px;color:#808080">.data:00000000014ABB08</span><span style="left:304.0px;color:#0000ff">DF 3A 00 A0 00 00 00 00</span><span style="left:574.0px;color:#0000ff">StringLiteral_7530</span><span style="left:745.0px;color:#000080">DCQ</span><span style="left:781.0px;color:#008040">0xA0003ADF</span><span style="left:934.0px;color:#8080ff">; DATA XREF: System.Xml.Serialization.TypeData$$.cctor</span></div>
<div class="r" style="top:414px"><span style="left:97.0px;color:#808080">.data:00000000014ABB08</span><span style="left:934.0px;color:#8080ff">; System.Xml.Serialization.TypeData$$.cctor+1C<svg class="ar" width="9" height="18" viewBox="0 0 9 18"><path d="M4.5 2.3V13.6M1.4 6.6L4.5 2.3L7.6 6.6" fill="none" stroke="currentColor" stroke-width="1.15"/></svg>r</span></div>
<div class="r" style="top:434px"><span style="left:97.0px;color:#808080">.data:00000000014ABB08</span><span style="left:934.0px;color:#8080ff">; .got:off_1432FD0<svg class="ar" width="9" height="18" viewBox="0 0 9 18"><path d="M4.5 2.3V13.6M1.4 6.6L4.5 2.3L7.6 6.6" fill="none" stroke="currentColor" stroke-width="1.15"/></svg>o</span></div>
<div class="r" style="top:454px"><span style="left:97.0px;color:#808080">.data:00000000014ABB08</span><span style="left:934.0px;color:#0000ff">; sealed</span></div>
<div class="r" style="top:474px"><span style="left:97.0px;color:#808000">.data:00000000014ABB10</span><span style="left:304.0px;color:#0000ff">E1</span><span style="left:574.0px;color:#000080">StringLiteral_7531</span><span style="left:745.0px;color:#000080">DCB</span><span style="left:781.0px;color:#008040">0xE1</span><span style="left:934.0px;color:#8080ff">; DATA XREF: .got:off_1421718<svg class="ar" width="9" height="18" viewBox="0 0 9 18"><path d="M4.5 2.3V13.6M1.4 6.6L4.5 2.3L7.6 6.6" fill="none" stroke="currentColor" stroke-width="1.15"/></svg>o</span></div>
<div class="r" style="top:494px"><span style="left:97.0px;color:#808000">.data:00000000014ABB10</span><span style="left:934.0px;color:#0000ff">; searchOption</span></div>
<div class="r" style="top:514px"><span style="left:97.0px;color:#808000">.data:00000000014ABB11</span><span style="left:304.0px;color:#0000ff">3A</span><span style="left:574.0px;color:#000080">DCB</span><span style="left:610.0px;color:#008040">0x3A</span><span style="left:655.0px;color:#808080">; :</span></div>
<div class="r" style="top:534px"><span style="left:97.0px;color:#808000">.data:00000000014ABB12</span><span style="left:304.0px;color:#0000ff">00</span><span style="left:574.0px;color:#000080">DCB</span><span style="left:637.0px;color:#008040">0</span></div>
<div class="r" style="top:554px"><span style="left:97.0px;color:#808000">.data:00000000014ABB13</span><span style="left:304.0px;color:#0000ff">A0</span><span style="left:574.0px;color:#000080">DCB</span><span style="left:610.0px;color:#008040">0xA0</span></div>
<div class="r" style="top:574px"><span style="left:97.0px;color:#808000">.data:00000000014ABB14</span><span style="left:304.0px;color:#0000ff">00</span><span style="left:574.0px;color:#000080">DCB</span><span style="left:637.0px;color:#008040">0</span></div>
<div class="r" style="top:594px"><span style="left:97.0px;color:#808000">.data:00000000014ABB15</span><span style="left:304.0px;color:#0000ff">00</span><span style="left:574.0px;color:#000080">DCB</span><span style="left:637.0px;color:#008040">0</span></div>
<div class="r" style="top:614px"><span style="left:97.0px;color:#808000">.data:00000000014ABB16</span><span style="left:304.0px;color:#0000ff">00</span><span style="left:574.0px;color:#000080">DCB</span><span style="left:637.0px;color:#008040">0</span></div>
<div class="r" style="top:634px"><span style="left:97.0px;color:#808000">.data:00000000014ABB17</span><span style="left:304.0px;color:#0000ff">00</span><span style="left:574.0px;color:#000080">DCB</span><span style="left:637.0px;color:#008040">0</span></div>
<div class="r" style="top:654px"><span style="left:97.0px;color:#808000">.data:00000000014ABB18</span><span style="left:304.0px;color:#0000ff">E3</span><span style="left:574.0px;color:#000080">StringLiteral_7532</span><span style="left:745.0px;color:#000080">DCB</span><span style="left:781.0px;color:#008040">0xE3</span><span style="left:934.0px;color:#8080ff">; DATA XREF: .got:off_14358D8<svg class="ar" width="9" height="18" viewBox="0 0 9 18"><path d="M4.5 2.3V13.6M1.4 6.6L4.5 2.3L7.6 6.6" fill="none" stroke="currentColor" stroke-width="1.15"/></svg>o</span></div>
<div class="r" style="top:674px"><span style="left:97.0px;color:#808000">.data:00000000014ABB18</span><span style="left:934.0px;color:#0000ff">; searchPattern</span></div>
<div class="r" style="top:694px"><span style="left:97.0px;color:#808000">.data:00000000014ABB19</span><span style="left:304.0px;color:#0000ff">3A</span><span style="left:574.0px;color:#000080">DCB</span><span style="left:610.0px;color:#008040">0x3A</span><span style="left:655.0px;color:#808080">; :</span></div>
<div class="r" style="top:714px"><span style="left:97.0px;color:#808000">.data:00000000014ABB1A</span><span style="left:304.0px;color:#0000ff">00</span><span style="left:574.0px;color:#000080">DCB</span><span style="left:637.0px;color:#008040">0</span></div>
<div class="r" style="top:734px"><span style="left:97.0px;color:#808000">.data:00000000014ABB1B</span><span style="left:304.0px;color:#0000ff">A0</span><span style="left:574.0px;color:#000080">DCB</span><span style="left:610.0px;color:#008040">0xA0</span></div>
<div class="r" style="top:754px"><span style="left:97.0px;color:#808000">.data:00000000014ABB1C</span><span style="left:304.0px;color:#0000ff">00</span><span style="left:574.0px;color:#000080">DCB</span><span style="left:637.0px;color:#008040">0</span></div>
<div class="r" style="top:774px"><span style="left:97.0px;color:#808000">.data:00000000014ABB1D</span><span style="left:304.0px;color:#0000ff">00</span><span style="left:574.0px;color:#000080">DCB</span><span style="left:637.0px;color:#008040">0</span></div>
<div class="r" style="top:794px"><span style="left:97.0px;color:#808000">.data:00000000014ABB1E</span><span style="left:304.0px;color:#0000ff">00</span><span style="left:574.0px;color:#000080">DCB</span><span style="left:637.0px;color:#008040">0</span></div>
<div class="r" style="top:814px"><span style="left:97.0px;color:#808000">.data:00000000014ABB1F</span><span style="left:304.0px;color:#0000ff">00</span><span style="left:574.0px;color:#000080">DCB</span><span style="left:637.0px;color:#008040">0</span></div>
<div style="position:absolute;left:699px;top:254px;width:2px;height:19px;background:#000"></div>
<div class="dot" style="top:177px"></div>
<div class="dot" style="top:257px"></div>
<div class="dot" style="top:337px"></div>
<div class="dot" style="top:397px"></div>
<div class="dot" style="top:477px"></div>
<div class="dot" style="top:517px"></div>
<div class="dot" style="top:537px"></div>
<div class="dot" style="top:557px"></div>
<div class="dot" style="top:577px"></div>
<div class="dot" style="top:597px"></div>
<div class="dot" style="top:617px"></div>
<div class="dot" style="top:637px"></div>
<div class="dot" style="top:657px"></div>
<div class="dot" style="top:697px"></div>
<div class="dot" style="top:717px"></div>
<div class="dot" style="top:737px"></div>
<div class="dot" style="top:757px"></div>
<div class="dot" style="top:777px"></div>
<div class="dot" style="top:797px"></div>
<div class="dot" style="top:817px"></div>
<div class="dot" style="top:837px"></div>
<!-- vertical scrollbar -->
<div style="position:absolute;left:1325px;top:173px;width:1px;height:687px;background:#fff"></div>
<div style="position:absolute;left:1326px;top:173px;width:21px;height:708px;background:#f0f0f0"></div>
<div style="position:absolute;left:1333px;top:749px;width:6px;height:22px;background:#888"></div>
<!-- status line -->
<div style="position:absolute;left:81px;top:838px;width:1244px;height:22px;background:#f0f0f0"></div>
<div style="position:absolute;left:81px;top:860px;width:1245px;height:1px;background:#fff"></div>
<div style="position:absolute;left:81px;top:861px;width:1266px;height:20px;background:#f0f0f0"></div>
<div style="position:absolute;left:102px;top:868px;width:916px;height:6px;background:#888"></div>
<div style="position:absolute;left:84px;top:840.5px;font-family:'Liberation Mono';font-size:14px;letter-spacing:0.6px;line-height:20px;color:#000;white-space:pre">0149BAF8</div>
<div style="position:absolute;left:156px;top:841px;width:1px;height:17px;background:#d4d4d4"></div>
<div style="position:absolute;left:162px;top:840.5px;font-family:'Liberation Mono';font-size:14px;letter-spacing:0.6px;line-height:20px;color:#000;white-space:pre">00000000014ABAF8: .data:StringLiteral_7528</div>
<div style="position:absolute;left:540px;top:841px;width:1px;height:17px;background:#d4d4d4"></div>
<div style="position:absolute;left:555px;top:841px;width:1px;height:17px;background:#d4d4d4"></div>
<!-- blue line + status bar -->
<div style="position:absolute;left:80px;top:881px;width:1267px;height:1px;background:#1f6fd0"></div>
<div style="position:absolute;left:1px;top:882px;width:1346px;height:22px;background:#f0f0f0"></div>
<div style="position:absolute;left:3px;top:886px;font-family:'Liberation Mono';font-size:13px;letter-spacing:1.2px;line-height:20px;color:#000;white-space:pre">AU:  idle</div>
<div style="position:absolute;left:103px;top:884px;width:1px;height:20px;background:#d0d0d0"></div>
<div style="position:absolute;left:109px;top:886px;font-family:'Liberation Mono';font-size:13px;letter-spacing:1.2px;line-height:20px;color:#000;white-space:pre">Down</div>
<div style="position:absolute;left:179px;top:884px;width:1px;height:20px;background:#d0d0d0"></div>
<div style="position:absolute;left:185px;top:886px;font-family:'Liberation Mono';font-size:13px;letter-spacing:1.2px;line-height:20px;color:#000;white-space:pre"><span class="cjk" style="font-size:14px;letter-spacing:0.5px">磁盘</span>: 57GB</div>
<div style="position:absolute;left:269px;top:884px;width:1px;height:20px;background:#d0d0d0"></div>
<!-- bottom corners -->
<div style="position:absolute;left:0;top:896px;width:8px;height:8px;background:radial-gradient(circle at 8px 0,transparent 7px,#8aa2b8 7.6px,#7ca6cc 8.6px)"></div>
<div style="position:absolute;left:1340px;top:896px;width:8px;height:8px;background:radial-gradient(circle at 0 0,transparent 7px,#b8b8b8 7.6px,#f4f4f4 8.6px)"></div>
<!-- watermark -->
<div style="position:absolute;left:1341px;top:891px;width:3px;height:3px;background:#a4a4a4"></div><div style="position:absolute;left:1337px;top:895px;width:3px;height:3px;background:#a4a4a4"></div><div style="position:absolute;left:1341px;top:895px;width:3px;height:3px;background:#a4a4a4"></div><div style="position:absolute;left:1333px;top:899px;width:3px;height:3px;background:#a4a4a4"></div><div style="position:absolute;left:1337px;top:899px;width:3px;height:3px;background:#a4a4a4"></div><div style="position:absolute;left:1341px;top:899px;width:3px;height:3px;background:#a4a4a4"></div>
<div class="cjk" style="position:absolute;left:1228px;top:854px;font-size:18.3px;font-weight:500;line-height:24px;color:#fff;text-shadow:0 0 1px rgba(0,0,0,0.5),0 0 3px rgba(0,0,0,0.3),1px 1px 1px rgba(0,0,0,0.3);white-space:pre">吾爱破解论坛</div>
<div style="position:absolute;left:1228px;top:877.5px;font-size:15.8px;line-height:20px;color:#fff;text-shadow:0 0 2px rgba(0,0,0,0.35),1px 1px 1px rgba(0,0,0,0.3);white-space:pre">www.52pojie.cn</div>
</body></html>
